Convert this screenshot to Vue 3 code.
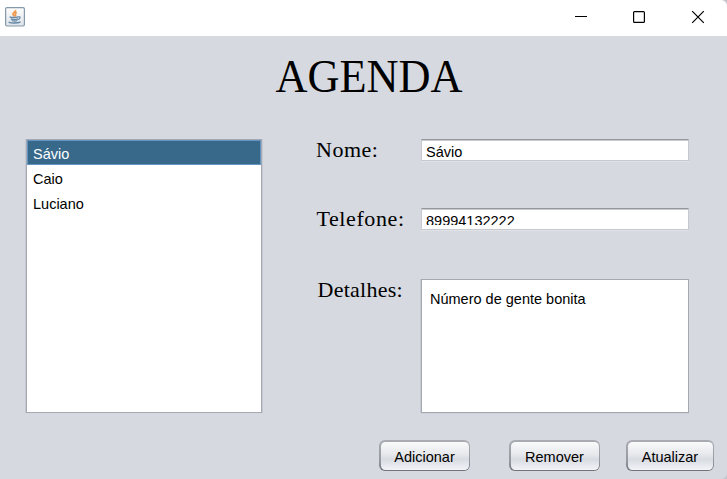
<script setup>
import { ref } from 'vue'

const contacts = ref([
  { name: 'Sávio', phone: '89994132222', details: 'Número de gente bonita' },
  { name: 'Caio', phone: '', details: '' },
  { name: 'Luciano', phone: '', details: '' },
])
const selected = ref(0)
const actions = ['Adicionar', 'Remover', 'Atualizar']
</script>

<template>
  <div class="window">
    <header class="titlebar">
      <svg class="java" width="20" height="20" viewBox="0 0 20 20" fill="none">
        <defs>
          <linearGradient id="tile" x1="0" y1="0" x2="0" y2="1">
            <stop offset="0" stop-color="#fdfdfd" />
            <stop offset="1" stop-color="#dfe3e8" />
          </linearGradient>
        </defs>
        <rect x=".6" y=".6" width="18.8" height="18.4" rx="1.4" fill="url(#tile)" stroke="#8499ab" stroke-width="1.2" />
        <path d="M10.5 3c.6 1.9-3 2.400-2.600 4.300.2.900 1.200 1.100 1.300 2M11.800 5.400c-2.200.9-1.900 1.700-1.300 2.400.4.600.1 1.100-.4 1.500" stroke="#f09a50" stroke-width="1.7" />
        <path d="M4.600 9.900c1.500.8 6.500.8 8.400 0M5.800 11.800c1.600.7 5.400.7 7 0M6.600 13.500c1.500.6 4.600.6 5.800 0" stroke="#6489a6" stroke-width="1.3" />
        <path d="M13 9.900c3-.9 2.700 2-.4 2.800" stroke="#6489a6" stroke-width="1.2" />
        <path d="M3.600 15.100c2.400 1.300 9 1.300 12-.2" stroke="#6489a6" stroke-width="1.5" />
      </svg>
      <svg class="controls" width="132" height="14" viewBox="0 0 132 14" fill="none" stroke="#000">
        <path d="M0 6.500h12" />
        <rect x="58.600" y="1.600" width="10.800" height="10.800" rx="1" stroke-width="1.200" />
        <path d="M117.200 1.200l11.600 11.600M128.800 1.200l-11.600 11.600" stroke-width="1.200" />
      </svg>
    </header>

    <main class="content">
      <h1>AGENDA</h1>
      <div class="columns">
        <ul class="list">
          <li
            v-for="(contact, i) in contacts"
            :key="contact.name"
            :class="{ active: i === selected }"
            @click="selected = i"
          >{{ contact.name }}</li>
        </ul>
        <div class="form">
          <label class="nome">Nome:</label>
          <div class="field">{{ contacts[selected].name }}</div>
          <label class="telefone">Telefone:</label>
          <div class="field phone"><span>{{ contacts[selected].phone }}</span></div>
          <label class="detalhes">Detalhes:</label>
          <div class="area">{{ contacts[selected].details }}</div>
        </div>
      </div>
      <footer class="actions">
        <button v-for="action in actions" :key="action" :class="action.toLowerCase()">
          <span>{{ action }}</span>
        </button>
      </footer>
    </main>
  </div>
</template>

<style>
body {
  margin: 0;
  background: #c4c6cb;
}
</style>

<style scoped>
.window {
  width: 727px;
  height: 479px;
  overflow: hidden;
  box-sizing: border-box;
  border-radius: 0 6px 6px 0;
  background: #d6d9df;
  color: #000;
  font: 14.5px/17px "Liberation Sans", Arial, sans-serif;
}
.titlebar {
  height: 36px;
  box-sizing: border-box;
  display: flex;
  justify-content: space-between;
  padding: 7px 20px 0 5px;
  background: #fff;
}
.controls {
  margin-top: 3px;
}
h1 {
  margin: 0;
  height: 103px;
  box-sizing: border-box;
  padding: 16px 0 0 275.5px;
  font: 44.3px/52px "Liberation Serif", "Times New Roman", serif;
  transform: scaleY(1.06);
  transform-origin: 0 57px;
}
.columns {
  display: flex;
  height: 274px;
  padding-left: 26px;
}
.list {
  width: 236px;
  height: 274px;
  box-sizing: border-box;
  margin: 0;
  padding: 0;
  list-style: none;
  background: #fff;
  border: 1px solid #a4a8b2;
  box-shadow: -1px 0 0 #c6c9d1, 1px 0 0 #c6c9d1;
}
.list li {
  height: 25px;
  box-sizing: border-box;
  padding: 6px 6px 0;
}
.list li.active {
  color: #fff;
  background: #39698a;
  border: 1px solid #6295c3;
  padding: 5px 5px 0;
}
.form {
  display: grid;
  grid-template-columns: 105px 268px;
  grid-template-rows: 69px 71px 134px;
  margin-left: 54px;
}
label {
  font: 22px/22px "Liberation Serif", "Times New Roman", serif;
  letter-spacing: 0.5px;
}
.telefone {
  padding-left: 0.5px;
  letter-spacing: 0.6px;
}
.detalhes {
  padding-left: 1.5px;
  letter-spacing: 0.25px;
}
.field {
  height: 22px;
  box-sizing: border-box;
  overflow: hidden;
  padding: 4px 4px 0;
  background: #fff;
  border: 1px solid #c6c9cf;
  border-top-color: #94979e;
  box-shadow: inset 0 1px 0 #c8cacd, 0 1px 0 #e0e2e6;
}
.phone span {
  display: block;
  height: 12px;
  overflow: hidden;
}
.area {
  height: 134px;
  box-sizing: border-box;
  padding: 11px 8px;
  background: #fff;
  border: 1px solid #a4a8b2;
  box-shadow: -1px 0 0 #c6c9d1, 0 1px 0 #cdd0d7;
}
.actions {
  display: flex;
  padding: 27px 0 0 379px;
}
button {
  width: 91px;
  height: 31px;
  box-sizing: border-box;
  padding: 1.5px;
  border: 0;
  border-radius: 6px;
  background: linear-gradient(#a9acb2, #95989e 70%, #6f7278);
  color: #000;
  font: 14.5px/17px "Liberation Sans", Arial, sans-serif;
}
button span {
  display: flex;
  justify-content: center;
  height: 28px;
  box-sizing: border-box;
  padding-top: 7px;
  border-radius: 4.5px;
  background: linear-gradient(#fafafb, #e6e8eb 45%, #d8dbe1 62%, #f2f4f8);
}
.remover {
  margin-left: 39px;
}
.atualizar {
  width: 88px;
  margin-left: 26px;
}
</style>
